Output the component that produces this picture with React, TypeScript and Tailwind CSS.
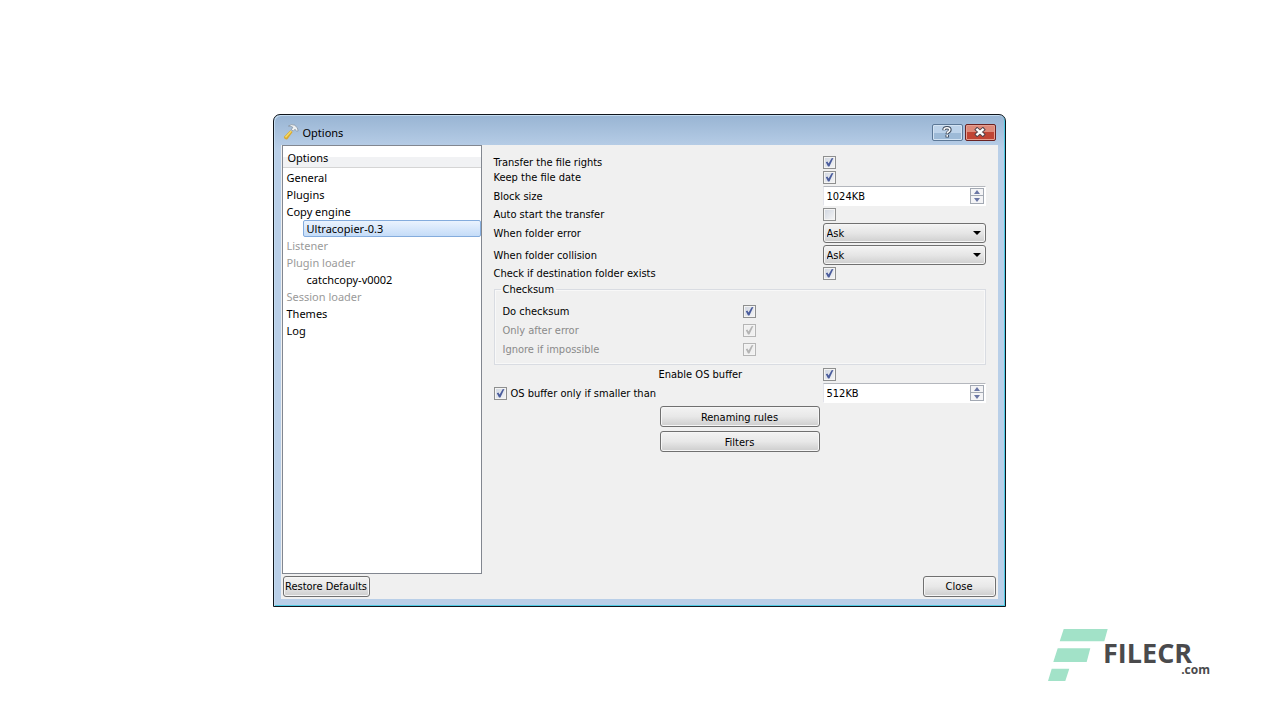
import { useId, useState } from "react";
import type { ReactNode } from "react";

type TreeItem = { label: string; nested?: boolean; muted?: boolean };

const treeItems: TreeItem[] = [
  { label: "General" },
  { label: "Plugins" },
  { label: "Copy engine" },
  { label: "Ultracopier-0.3", nested: true },
  { label: "Listener", muted: true },
  { label: "Plugin loader", muted: true },
  { label: "catchcopy-v0002", nested: true },
  { label: "Session loader", muted: true },
  { label: "Themes" },
  { label: "Log" },
];

function CheckBox({ id, checked = false, disabled = false }: { id: string; checked?: boolean; disabled?: boolean }) {
  const [on, setOn] = useState(checked);
  return (
    <span className="grid size-[13px] shrink-0">
      <input
        id={id}
        type="checkbox"
        checked={on}
        disabled={disabled}
        onChange={(e) => setOn(e.target.checked)}
        className="col-start-1 row-start-1 m-0 size-[13px] appearance-none border border-[#8e8f8f] bg-linear-to-br from-[#cfd5e0] to-[#f6f6f6] shadow-[inset_0_0_0_1px_#f4f4f4] disabled:border-[#b5b5b5] disabled:from-[#f0f0f0] disabled:to-[#f0f0f0]"
      />
      {on && (
        <svg viewBox="0 0 13 13" className="pointer-events-none col-start-1 row-start-1 size-[13px]" aria-hidden="true">
          <path
            d="M2.8 6.2 L4.4 5.5 L5.6 7.6 L8.6 2.2 L10.4 2 L6.4 10.6 L5 10.6 Z"
            fill={disabled ? "#b4b4b4" : "#4a5c9c"}
          />
        </svg>
      )}
    </span>
  );
}

function Row({ label, children, muted = false }: { label: string; muted?: boolean; children: (id: string) => ReactNode }) {
  const id = useId();
  return (
    <>
      <label htmlFor={id} className={muted ? "text-[#8a8a8a]" : "text-black"}>
        {label}
      </label>
      {children(id)}
    </>
  );
}

function SpinBox({ id, value, label }: { id?: string; value: string; label?: string }) {
  return (
    <span className="flex h-5 w-full items-center border border-t-[#b4b7bd] border-r-white border-b-white border-l-[#e2e3ea] bg-white">
      <input id={id} aria-label={label} type="text" defaultValue={value} className="h-full min-w-0 flex-1 bg-transparent px-[3px] pt-[1px] outline-none" />
      <span className="mr-[1px] flex w-[14px] flex-col border border-[#a3a9b3] bg-[#f4f4f6]">
        <button type="button" aria-label="Increase" className="flex h-[7px] items-center justify-center border-b border-[#a3a9b3]">
          <svg viewBox="0 0 6 4" className="h-1 w-1.5" aria-hidden="true">
            <path d="M3 0 L6 4 H0 Z" fill="#6a76a4" />
          </svg>
        </button>
        <button type="button" aria-label="Decrease" className="flex h-[7px] items-center justify-center">
          <svg viewBox="0 0 6 4" className="h-1 w-1.5" aria-hidden="true">
            <path d="M0 0 H6 L3 4 Z" fill="#6a76a4" />
          </svg>
        </button>
      </span>
    </span>
  );
}

function DropDown({ id }: { id: string }) {
  return (
    <span className="grid w-full items-center">
      <select
        id={id}
        className="col-start-1 row-start-1 h-5 w-full appearance-none rounded-[3px] border border-[#707070] bg-linear-to-b from-[#f4f4f4] via-[#e6e6e6] to-[#cfcfcf] px-[3px] shadow-[inset_0_0_0_1px_#f6f6f6]"
      >
        <option>Ask</option>
      </select>
      <svg viewBox="0 0 8 4" className="pointer-events-none col-start-1 row-start-1 mr-[5px] h-1 w-2 justify-self-end" aria-hidden="true">
        <path d="M0 0 H8 L4 4 Z" fill="#000" />
      </svg>
    </span>
  );
}

function PushButton({ children, className }: { children: ReactNode; className: string }) {
  return (
    <button
      type="button"
      className={`h-[21px] rounded-[3px] border border-[#707070] bg-linear-to-b from-[#f3f3f3] via-[#e8e8e8] to-[#cdcdcd] pt-[1px] text-center whitespace-nowrap shadow-[inset_0_0_0_1px_#f6f6f6] ${className}`}
    >
      {children}
    </button>
  );
}

function TitleBar() {
  return (
    <header className="flex h-[30px] items-center pr-[9px] pl-[9px]">
      <svg viewBox="0 0 16 16" className="mt-1 mr-1 size-4" aria-hidden="true">
        <path d="M0.8 13 L7.4 6.2 L9.6 8 L4.4 15.2 Q1.4 16.2 0.8 13Z" fill="#d9a832" />
        <path d="M1.8 13 L7.6 6.8 L8.6 7.4 L3.2 13.8Z" fill="#f5dd66" />
        <path d="M5.4 2 Q8.4 -0.4 11.6 1.2 L14.2 3.6 L15.2 6.8 L13.4 7.2 L12 5.2 L10.2 7.2 L8.4 5.6 L9.8 3.2 Q7.4 2 5.4 2Z" fill="#eef1f3" stroke="#7f8b97" strokeWidth="0.7" />
      </svg>
      <h1 className="mt-[5px] flex-1 font-['Noto_Sans',sans-serif] text-[11px] leading-4">Options</h1>
      <div className="mt-1 flex gap-[2px]">
        <button
          type="button"
          aria-label="Help"
          className="flex h-[17px] w-[31px] items-center justify-center rounded-[2px] border border-[#5c7897] bg-linear-to-b from-[#bdd3ea] from-50% to-[#9dbad7] to-50% shadow-[inset_0_0_0_1px_#d3e3f3]"
        >
          <svg viewBox="0 0 10 12" className="h-3 w-2.5" fill="none" aria-hidden="true">
            <path d="M2 4.2 Q2 1.8 5 1.8 Q8 1.8 8 4 Q8 5.2 6.4 6 Q5.2 6.6 5.2 8 M5.2 8.8 V11.4" stroke="#3f4b5c" strokeWidth="3.4" />
            <path d="M2 3.8 Q2.2 1.8 5 1.8 Q7.8 1.8 7.8 3.8 Q7.8 5 6.4 5.8 Q5.2 6.4 5.2 7.6 M5.2 9 V10.8" stroke="#fff" strokeWidth="1.6" />
          </svg>
        </button>
        <button
          type="button"
          aria-label="Close window"
          className="flex h-[17px] w-[31px] items-center justify-center rounded-[2px] border border-[#6a2222] bg-linear-to-b from-[#dd8a7a] from-45% to-[#c04434] to-50% shadow-[inset_0_0_0_1px_#e6a092]"
        >
          <svg viewBox="0 0 12 10" className="h-2.5 w-3" fill="none" aria-hidden="true">
            <path d="M1.6 1.2 L10.4 8.8 M10.4 1.2 L1.6 8.8" stroke="#53454c" strokeWidth="4.2" />
            <path d="M2.4 1.9 L9.6 8.1 M9.6 1.9 L2.4 8.1" stroke="#fff" strokeWidth="2.4" />
          </svg>
        </button>
      </div>
    </header>
  );
}

function OptionsTree() {
  const [selected, setSelected] = useState("Ultracopier-0.3");
  return (
    <nav aria-label="Options" className="h-[429px] w-[200px] shrink-0 border border-[#828790] bg-white font-['Noto_Sans',sans-serif] text-[11px]">
      <h2 className="h-[22px] border-b border-[#d5d5d5] bg-linear-to-b from-white from-50% to-[#f1f2f4] to-50% pl-[5px] leading-6">Options</h2>
      <ul className="pt-[1px]">
        {treeItems.map((item) => (
          <li key={item.label} className={item.nested ? "pl-5" : ""}>
            <button
              type="button"
              disabled={item.muted}
              onClick={() => setSelected(item.label)}
              className={`block h-[17px] w-full rounded-[2px] border pl-[3px] text-left leading-[15px] disabled:text-[#9a9a9a] ${
                selected === item.label ? "border-[#84acdd] bg-linear-to-b from-[#eaf3fe] to-[#c5dcf8]" : "border-transparent"
              }`}
            >
              {item.label}
            </button>
          </li>
        ))}
      </ul>
    </nav>
  );
}

function EngineOptions() {
  const bufferId = useId();
  const limitId = useId();
  return (
    <section className="flex-1 pt-[11px] pr-3 pl-3 leading-[13px]">
      <div className="grid grid-cols-[329px_1fr] items-center gap-y-[2px]">
        <Row label="Transfer the file rights">{(id) => <CheckBox id={id} checked />}</Row>
        <Row label="Keep the file date">{(id) => <CheckBox id={id} checked />}</Row>
        <Row label="Block size">{(id) => <SpinBox id={id} value="1024KB" />}</Row>
        <Row label="Auto start the transfer">{(id) => <CheckBox id={id} />}</Row>
        <Row label="When folder error">{(id) => <DropDown id={id} />}</Row>
        <Row label="When folder collision">{(id) => <DropDown id={id} />}</Row>
        <Row label="Check if destination folder exists">{(id) => <CheckBox id={id} checked />}</Row>
      </div>

      <fieldset className="mt-[3px] border border-[#d9dce2] px-2 pt-[9px] pb-2 shadow-[inset_0_0_0_1px_#f8f8f8]">
        <legend className="-ml-[2px] px-[2px]">Checksum</legend>
        <div className="grid grid-cols-[240px_1fr] items-center gap-y-1.5">
          <Row label="Do checksum">{(id) => <CheckBox id={id} checked />}</Row>
          <Row label="Only after error" muted>{(id) => <CheckBox id={id} checked disabled />}</Row>
          <Row label="Ignore if impossible" muted>{(id) => <CheckBox id={id} checked disabled />}</Row>
        </div>
      </fieldset>

      <div className="mt-[3px] grid grid-cols-[165px_164px_1fr] items-center gap-y-[2px]">
        <label htmlFor={bufferId} className="col-start-2">
          Enable OS buffer
        </label>
        <CheckBox id={bufferId} checked />
        <div className="col-span-2 flex items-center gap-1">
          <CheckBox id={limitId} checked />
          <label htmlFor={limitId}>OS buffer only if smaller than</label>
        </div>
        <SpinBox value="512KB" label="OS buffer size limit" />
      </div>

      <div className="mt-[3px] flex flex-col items-center gap-1">
        <PushButton className="w-40">Renaming rules</PushButton>
        <PushButton className="w-40">Filters</PushButton>
      </div>
    </section>
  );
}

function Watermark() {
  return (
    <footer className="mt-[22px] flex justify-end pr-[52px]">
      <svg viewBox="0 0 60 52" className="h-[52px] w-[60px]" aria-hidden="true">
        <path
          d="M15.7 0 H59.7 L56.3 12.2 H11.7 Z M9.7 19.3 H42.3 L38.7 33 H5.3 Z M3.7 39.7 H21.3 L17.3 52 H0 Z"
          fill="#a2e2c8"
        />
      </svg>
      <div className="-ml-[5px] flex w-[107px] flex-col pt-[13px] font-['Open_Sans',sans-serif] font-bold text-[#4a4a4c]">
        <span className="text-[27px] leading-[22px]">FILECR</span>
        <span className="self-end text-[12px] leading-3">.com</span>
      </div>
    </footer>
  );
}

export default function App() {
  return (
    <div className="min-h-screen bg-white pt-[114px] pr-[18px] pl-4 font-['DejaVu_Sans_Condensed','DejaVu_Sans',sans-serif] text-[11px] text-black">
      <main className="mx-auto w-full max-w-[733px] rounded-t-[7px] border border-[#10151c] bg-linear-to-b from-[#98b4d3] to-[#b9cfe8] to-[34px] shadow-[inset_1px_1px_0_0_#c4dcf0,inset_-1px_-1px_0_0_#4fcbe4]">
        <TitleBar />
        <div className="mx-[7px] mb-[7px] flex flex-col bg-[#f0f0f0]">
          <div className="flex pl-[1px]">
            <OptionsTree />
            <EngineOptions />
          </div>
          <div className="flex justify-between p-[2px]">
            <PushButton className="w-[87px]">Restore Defaults</PushButton>
            <PushButton className="w-[73px]">Close</PushButton>
          </div>
        </div>
      </main>
      <Watermark />
    </div>
  );
}
